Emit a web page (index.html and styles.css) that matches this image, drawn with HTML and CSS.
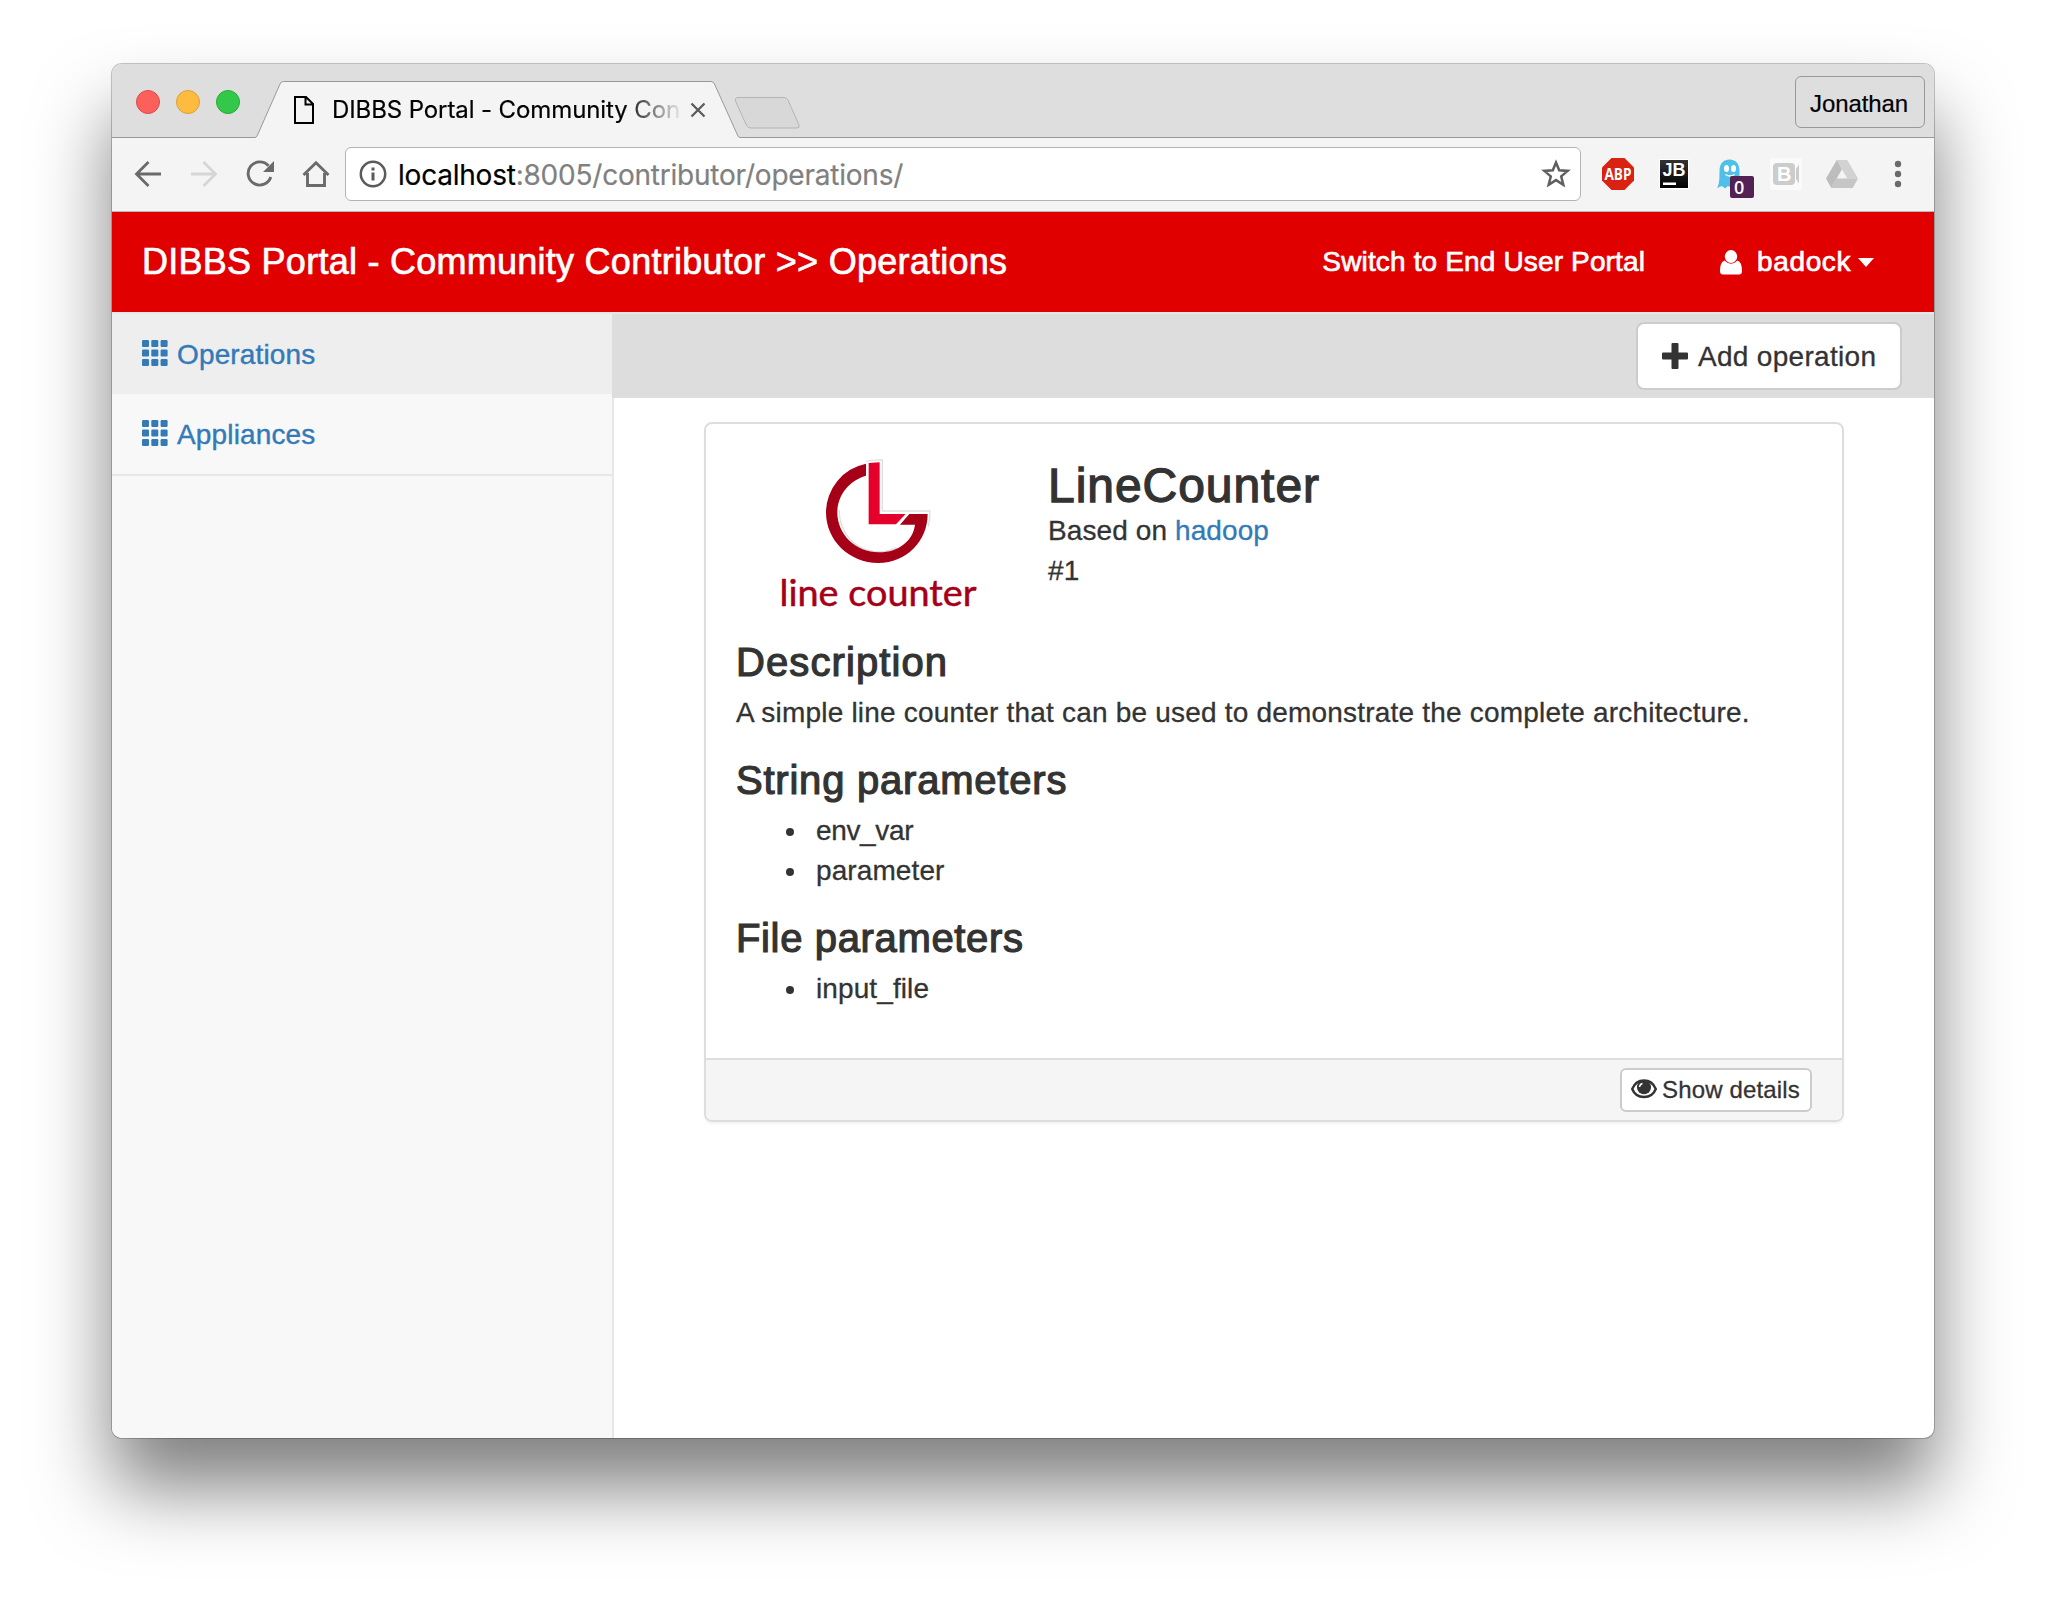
FILE: index.html
```html
<!DOCTYPE html>
<html lang="en">
<head>
<meta charset="utf-8">
<title>DIBBS Portal - Community Contributor</title>
<link rel="stylesheet" href="styles.css">
</head>
<body>
<div class="window">
  <div class="tabstrip">
    <div class="lights"><i class="light red"></i><i class="light amber"></i><i class="light green"></i></div>
    <div class="tab">
      <svg class="tab-shape" width="486" height="58" viewBox="0 0 486 58"><path d="M0 56.5H1Q2.500 56.500 3.500 54L26 3Q27.200 .5 29.500 .5H457Q459.500 .5 460.500 3L483.500 54Q484.500 56.500 486 56.500V58H0Z" fill="#f4f4f4"/><path d="M0 56.500H1Q2.500 56.500 3.500 54L26 3Q27.200 .5 29.500 .5H457Q459.500 .5 460.500 3L483.500 54Q484.500 56.500 486 56.500" fill="none" stroke="#999"/></svg>
      <svg class="page-icon" width="20" height="28" viewBox="0 0 20 28"><path d="M1 1H12L19 8V27H1ZM11.500 1V8.500H19" fill="none" stroke="#000" stroke-width="2"/></svg>
      <span class="tab-title">DIBBS Portal - Community Con</span>
      <svg class="close" width="16" height="16" viewBox="0 0 16 16"><path d="M1.500 1.500L14.500 14.500M14.500 1.500L1.500 14.500" stroke="#5a5a5a" stroke-width="2.200"/></svg>
    </div>
    <svg class="newtab" width="67" height="32" viewBox="0 0 67 32"><path d="M4 .5H50Q52.500 .5 54 3L65 28Q66 31 63 31H17Q14 31 12.500 28.500L1.500 4Q.5 .5 4 .5Z" fill="#d8d8d8" stroke="#b4b4b4"/></svg>
    <div class="profile">Jonathan</div>
  </div>
  <div class="toolbar">
    <svg class="nav-icon back" width="28" height="28" viewBox="0 0 28 28" fill="none" stroke="#6a6a6a" stroke-width="2.800"><path d="M27 14H3M14.500 2L2.500 14L14.500 26"/></svg>
    <svg class="nav-icon fwd" width="28" height="28" viewBox="0 0 28 28" fill="none" stroke="#d6d6d6" stroke-width="2.800"><path d="M1 14H25M13.500 2L25.500 14L13.500 26"/></svg>
    <svg class="nav-icon reload" width="28" height="28" viewBox="0 0 28 28"><path d="M22.500 5.800A11.600 11.600 0 1 0 24.800 17" fill="none" stroke="#6a6a6a" stroke-width="2.900"/><path d="M28 1V12H17Z" fill="#6a6a6a"/></svg>
    <svg class="nav-icon home" width="28" height="28" viewBox="0 0 28 28" fill="none" stroke="#6a6a6a" stroke-width="2.900"><path d="M1.500 15L14 2.800L26.500 15M5.500 13V25.500H22.500V13"/></svg>
    <div class="omnibox">
      <svg width="28" height="28" viewBox="0 0 28 28"><circle cx="14" cy="14" r="12.200" fill="none" stroke="#5a5a5a" stroke-width="2.500"/><path d="M12.500 12.500H15.500V20.500H12.500ZM12.500 7.500H15.500V10.500H12.500Z" fill="#5a5a5a"/></svg>
      <span class="url"><span class="host">localhost</span>:8005/contributor/operations/</span>
      <svg class="star" width="30" height="30" viewBox="0 0 30 30"><path d="M15 3.500L18.200 11.300L26.700 11.900L20.200 17.400L22.300 25.700L15 21.100L7.700 25.700L9.800 17.400L3.300 11.900L11.800 11.300Z" fill="none" stroke="#5f5f5f" stroke-width="2.500"/></svg>
    </div>
    <div class="extensions">
      <svg width="32" height="32" viewBox="0 0 32 32"><path d="M9.500 0H22.500L32 9.500V22.500L22.500 32H9.500L0 22.500V9.500Z" fill="#d92211"/><text class="abp" x="2.500" y="22" textLength="27" lengthAdjust="spacingAndGlyphs">ABP</text></svg>
      <svg width="32" height="32" viewBox="0 0 32 32"><defs><linearGradient id="jb" x2="0" y2="1"><stop offset="0" stop-color="#333"/><stop offset="1" stop-color="#000"/></linearGradient></defs><path d="M1 1H31V31H1Z" fill="#fff"/><path d="M2 2H30V30H2Z" fill="url(#jb)"/><text class="jb" x="4.500" y="18" textLength="23" lengthAdjust="spacingAndGlyphs">JB</text><path d="M5 24.500H18V27H5Z" fill="#fff"/></svg>
      <svg class="ghost" width="40" height="42" viewBox="0 0 40 42"><path d="M3.500 13C3.500 5 8 1.500 13.500 1.500S23.500 5 23.500 13V30H16L12 28L9 30.500L6 28L1 30C3.500 26 3.500 20 3.500 13Z" fill="#4fc0e8"/><ellipse cx="10.500" cy="10.500" rx="2.500" ry="3.500" fill="#fff"/><ellipse cx="17.500" cy="10.500" rx="2.500" ry="3.500" fill="#fff"/><path d="M9.500 16.500Q14 19.500 18.500 16.500" fill="none" stroke="#fff" stroke-width="1.500"/><rect x="14" y="18" width="24" height="22" rx="2" fill="#532153"/><text class="zero" x="18" y="35.500">0</text></svg>
      <svg width="32" height="32" viewBox="0 0 32 32"><path d="M0 0H32V32H0Z" fill="#fafafa"/><rect x="3" y="5" width="22" height="22" rx="4" fill="#ccc"/><path d="M26 11L29 6.500V25.500L26 21Z" fill="#ccc"/><text class="bj" x="7" y="23">B</text></svg>
      <svg width="32" height="28" viewBox="0 0 32 28"><path d="M10.700 0H21.300L32 18.500H21.300Z" fill="#d2d2d2"/><path d="M10.700 0L16 9.300L5.300 28L0 18.500Z" fill="#bdbdbd"/><path d="M10.700 18.500H32L26.700 28H5.300Z" fill="#c6c6c6"/></svg>
      <svg class="dots" width="8" height="28" viewBox="0 0 8 28" fill="#6a6a6a"><circle cx="4" cy="4" r="3.200"/><circle cx="4" cy="14" r="3.200"/><circle cx="4" cy="24" r="3.200"/></svg>
    </div>
  </div>
  <header class="navbar">
    <div class="brand">DIBBS Portal - Community Contributor &gt;&gt; Operations</div>
    <a class="switch">Switch to End User Portal</a>
    <a class="user"><svg width="24" height="25" viewBox="0 0 24 25" fill="#fff"><ellipse cx="12" cy="6.500" rx="6.200" ry="6.500"/><path d="M5.500 10.500Q12 17 18.500 10.500Q23 12 23 21Q23 24.500 20 24.500H4Q1 24.500 1 21Q1 12 5.500 10.500Z"/></svg><span class="username">badock</span><i class="caret"></i></a>
  </header>
  <div class="page">
    <nav class="sidebar">
      <a class="item active"><svg width="26" height="26" viewBox="0 0 26 26" fill="#337ab7"><g id="th"><rect width="7" height="7" rx="1.200"/><rect x="9.300" width="7" height="7" rx="1.200"/><rect x="18.600" width="7" height="7" rx="1.200"/><rect y="9.500" width="7" height="7" rx="1.200"/><rect x="9.300" y="9.500" width="7" height="7" rx="1.200"/><rect x="18.600" y="9.500" width="7" height="7" rx="1.200"/><rect y="19" width="7" height="7" rx="1.200"/><rect x="9.300" y="19" width="7" height="7" rx="1.200"/><rect x="18.600" y="19" width="7" height="7" rx="1.200"/></g></svg><span>Operations</span></a>
      <a class="item last"><svg width="26" height="26" viewBox="0 0 26 26" fill="#337ab7"><use href="#th"/></svg><span>Appliances</span></a>
    </nav>
    <main class="main">
      <div class="actions"><a class="btn"><svg width="26" height="26" viewBox="0 0 26 26"><path d="M10.500 0H15.500Q16.500 0 16.500 1V9.500H25Q26 9.500 26 10.500V15.500Q26 16.500 25 16.500H16.500V25Q16.500 26 15.500 26H10.500Q9.500 26 9.500 25V16.500H1Q0 16.500 0 15.500V10.500Q0 9.500 1 9.500H9.500V1Q9.500 0 10.500 0Z" fill="#333"/></svg><span>Add operation</span></a></div>
      <section class="panel">
        <div class="panel-body">
          <div class="head">
            <svg class="logo" width="320" height="210" viewBox="0 0 320 210"><g transform="scale(.3333)"><path d="M498 124A158 158 0 0 1 547 120V273H690Q690 300 685 320M418 270A118 122 0 0 0 590 382" fill="none" stroke="#dedede" stroke-width="4"/><path d="M498 131A150 150 0 0 0 378 277C378 362 448 429 535 429C620 429 683 362 683 282H628L600 314H645C640 360 598 397 537 397C468 397 412 345 412 277C412 228 445 183 498 167Z" fill="#a60019"/><path d="M506 129L539 127V282H617L588 313H506Z" fill="#e4002b"/></g><text class="logo-text" x="79.500" y="185.500" textLength="197" lengthAdjust="spacingAndGlyphs">line counter</text></svg>
            <div class="title"><h3>LineCounter</h3><div class="based">Based on <a>hadoop</a></div><div>#1</div></div>
          </div>
          <h4 class="wide">Description</h4>
          <p>A simple line counter that can be used to demonstrate the complete architecture.</p>
          <h4>String parameters</h4>
          <ul><li class="tight">env_var</li><li>parameter</li></ul>
          <h4 class="narrow">File parameters</h4>
          <ul><li>input_file</li></ul>
        </div>
        <div class="panel-footer"><a class="btn small"><svg width="26" height="20" viewBox="0 0 26 20"><path d="M13 1.500C7 1.500 3 5.500 1.200 10C3 14.500 7 18 13 18S23 14.500 24.800 10C23 5.500 19 1.500 13 1.500Z" fill="#fff" stroke="#333" stroke-width="2.400"/><circle cx="13" cy="8.300" r="7" fill="#333"/><path d="M8.500 8Q9 5 11.500 4.500" fill="none" stroke="#fff" stroke-width="1.500"/></svg><span>Show details</span></a></div>
      </section>
    </main>
  </div>
</div>
</body>
</html>
```
FILE: styles.css
```css
* { box-sizing: border-box; }
body { margin: 0; width: 2046px; height: 1598px; overflow: hidden; background: #fff; padding: 64px 112px; font: 28px/40px "Liberation Sans", Arial, sans-serif; color: #333; }
svg { display: block; flex: none; }
.window { width: 1822px; height: 1374px; border-radius: 10px; background: #fff; overflow: hidden; display: flex; flex-direction: column; box-shadow: 0 0 0 1px rgba(0,0,0,.22), 0 50px 76px rgba(0,0,0,.5); }
.tabstrip { height: 74px; flex: none; display: flex; background: #dedede linear-gradient(#999,#999) 0 73px / 100% 1px no-repeat; }
.lights { display: flex; gap: 16px; padding: 26px 0 0 24px; width: 142px; }
.light { width: 24px; height: 24px; border-radius: 50%; border: 1px solid; }
.red { background: #fc605b; border-color: #df4845; }
.amber { background: #fdbc40; border-color: #de9f34; }
.green { background: #34c84a; border-color: #27aa35; }
.tab { position: relative; width: 486px; height: 58px; margin-top: 17px; display: flex; align-items: flex-start; }
.tab-shape { position: absolute; left: 0; top: 0; }
.page-icon { position: relative; margin: 15px 0 0 40px; }
.tab-title { position: relative; margin: 9px 0 0 18px; width: 350px; flex: none; overflow: hidden; white-space: nowrap; font-family: Inter, sans-serif; font-size: 24px; letter-spacing: -.1px; color: #000; -webkit-text-stroke: .2px; -webkit-mask-image: linear-gradient(90deg, #000 290px, transparent 352px); mask-image: linear-gradient(90deg, #000 290px, transparent 352px); }
.close { position: relative; margin: 21px 0 0 8px; }
.newtab { margin: 33px 0 0 -6px; }
.profile { margin: 12px 9px 0 auto; width: 130px; height: 52px; border: 1px solid #999; border-radius: 6px; color: #000; font-size: 24px; line-height: 53px; text-align: center; letter-spacing: -.1px; padding-right: 2px; -webkit-text-stroke: .2px; }
.toolbar { height: 74px; flex: none; display: flex; background: #f4f4f4; border-bottom: 1px solid #b8b8b8; padding: 9px 0 0 22px; }
.nav-icon { margin: 13px 28px 0 0; }
.home { margin-right: 15px; }
.omnibox { width: 1236px; height: 54px; border: 1px solid #b4b4b4; border-radius: 6px; background: #fff; display: flex; align-items: center; padding: 0 9px 0 13px; }
.url { font-family: Inter, sans-serif; font-size: 28px; margin-left: 11px; padding-top: 2px; flex: 1; color: #808080; letter-spacing: -.22px; -webkit-text-stroke: .2px; }
.host { color: #000; }
.extensions { display: flex; align-items: flex-start; padding: 11px 0 0 21px; }
.extensions svg { margin-right: 24px; }
.extensions .ghost { margin: 0 14px 0 2px; }
.extensions svg:nth-child(5) { margin: 2px 36px 0 0; }
.extensions .dots { margin: 2px 0 0; }
.abp { font: bold 16px "Open Sans", sans-serif; fill: #fff; }
.jb { font: bold 18px "Liberation Sans", sans-serif; fill: #fff; }
.zero { font: 600 18px "Open Sans", sans-serif; fill: #fff; }
.bj { font: bold 20px "Liberation Sans", sans-serif; fill: #fff; }
.navbar { height: 102px; flex: none; background: #e10000; border-bottom: 2px solid #e7e7e7; display: flex; align-items: center; color: #fff; padding: 0 60px 0 30px; -webkit-text-stroke: .7px; }
.brand { font-size: 36px; margin-right: auto; letter-spacing: .26px; }
.switch { letter-spacing: .15px; }
.user { display: flex; align-items: center; margin-left: 74px; }
.username { margin-left: 14px; letter-spacing: .6px; }
.caret { margin-left: 7px; border: 8px solid transparent; border-top: 9px solid #fff; border-bottom: 0; }
.page { flex: 1; display: flex; }
.sidebar { width: 502px; background: #f8f8f8; border-right: 2px solid #e7e7e7; }
.item { display: flex; align-items: center; height: 80px; padding-left: 30px; color: #337ab7; letter-spacing: .15px; -webkit-text-stroke: .4px; }
.item svg { margin-right: 9px; margin-top: -2px; }
.item span, .btn span { padding-top: 1px; }
.active { background: #eee; }
.last { height: 82px; border-bottom: 2px solid #e7e7e7; }
.main { flex: 1; -webkit-text-stroke: .3px; }
.actions { height: 84px; margin-left: -2px; background: #ddd; display: flex; justify-content: flex-end; padding: 8px 32px 0 0; }
.btn { display: flex; align-items: center; height: 68px; width: 266px; border: 2px solid #ccc; border-radius: 8px; background: #fff; padding-left: 24px; white-space: nowrap; color: #333; letter-spacing: .3px; }
.btn svg { margin-right: 10px; }
.panel { width: 1140px; margin: 24px 0 0 90px; border: 2px solid #ddd; border-radius: 8px; box-shadow: 0 2px 2px rgba(0,0,0,.05); overflow: hidden; }
.panel-body { height: 634px; padding: 0 30px; letter-spacing: .2px; }
.head { display: flex; height: 216px; }
.logo { margin: -4px 28px 0 -36px; letter-spacing: 0; }
.logo-text { font: 37px Lato, sans-serif; fill: #a60019; stroke: #a60019; stroke-width: .5px; }
.title { padding-top: 37px; }
.based { letter-spacing: .1px; }
h3, h4, p, ul { margin: 0; font-weight: normal; }
h3 { font-size: 48px; line-height: 50px; letter-spacing: .95px; -webkit-text-stroke: 1.3px; }
h4 { font-size: 40px; line-height: 44px; letter-spacing: .78px; -webkit-text-stroke: 1.2px; margin-bottom: 9px; }
.wide { letter-spacing: 1.1px; }
.narrow { letter-spacing: .65px; }
p, ul { margin-bottom: 25px; }
ul { padding: 0; list-style: none; }
li { display: flex; align-items: center; letter-spacing: .1px; }
li::before { content: ""; width: 8px; height: 8px; border-radius: 50%; background: #333; margin: 2px 22px 0 50px; }
.tight { letter-spacing: -.35px; }
a { color: #337ab7; }
.navbar a { color: #fff; }
.panel-footer { height: 62px; border-top: 2px solid #ddd; background: #f5f5f5; display: flex; justify-content: flex-end; padding: 8px 30px 0 0; }
.small { height: 44px; width: 192px; font-size: 24px; padding-left: 9px; border-radius: 6px; letter-spacing: .15px; }
.small span { padding: 0; }
.small svg { margin-right: 5px; margin-top: -3px; }
```
